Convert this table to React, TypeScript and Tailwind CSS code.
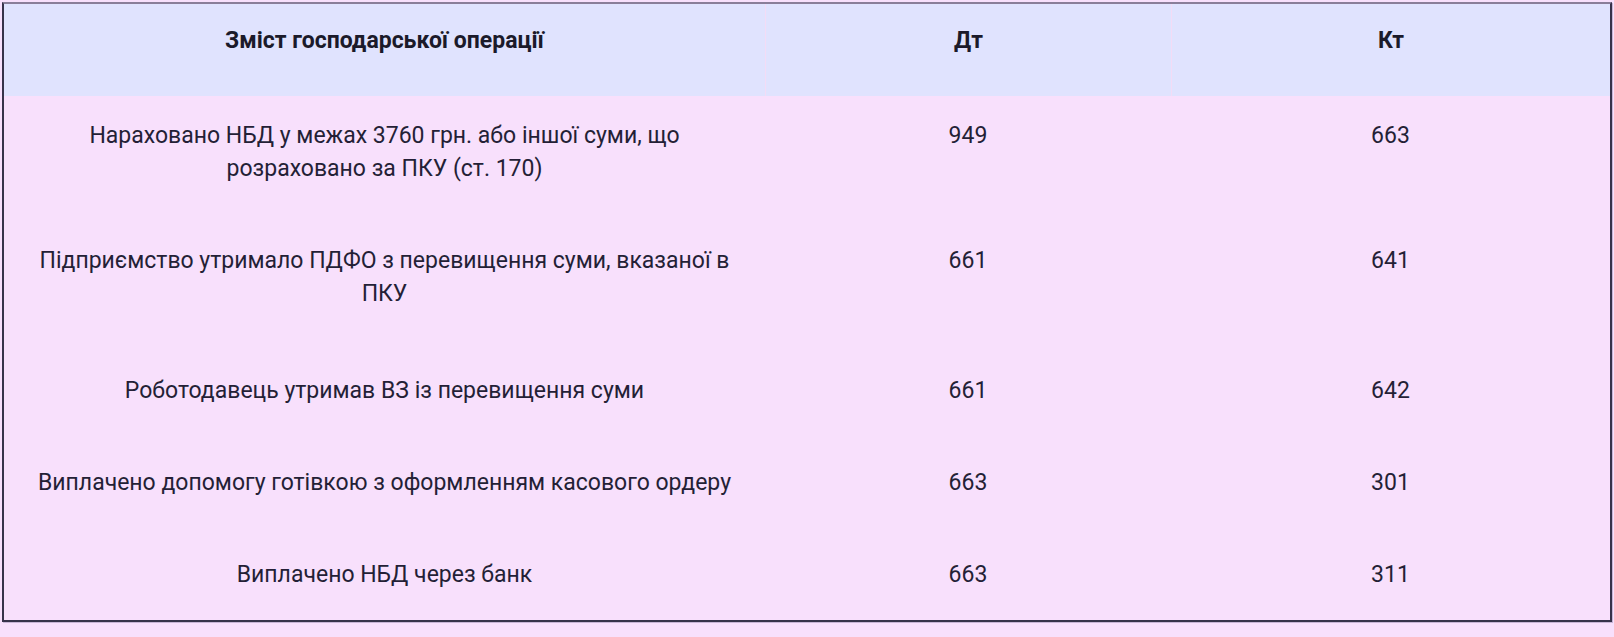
import React from 'react';

type Row = { lines: string[]; dt: string; kt: string; h: string; pt: string };

const rows: Row[] = [
  {
    lines: ['Нараховано НБД у межах 3760 грн. або іншої суми, що', 'розраховано за ПКУ (ст. 170)'],
    dt: '949',
    kt: '663',
    h: 'h-[126px]',
    pt: 'pt-[23px]',
  },
  {
    lines: ['Підприємство утримало ПДФО з перевищення суми, вказаної в', 'ПКУ'],
    dt: '661',
    kt: '641',
    h: 'h-[126px]',
    pt: 'pt-[22px]',
  },
  {
    lines: ['Роботодавець утримав ВЗ із перевищення суми'],
    dt: '661',
    kt: '642',
    h: 'h-[90px]',
    pt: 'pt-[26px]',
  },
  {
    lines: ['Виплачено допомогу готівкою з оформленням касового ордеру'],
    dt: '663',
    kt: '301',
    h: 'h-[91px]',
    pt: 'pt-[28px]',
  },
  {
    lines: ['Виплачено НБД через банк'],
    dt: '663',
    kt: '311',
    h: 'h-[91px]',
    pt: 'pt-[29px]',
  },
];

export default function App() {
  return (
    <div className="min-h-screen w-full bg-[#f8e0fc] pt-[2px] pl-[2px] font-['Roboto','Liberation_Sans',sans-serif]">
      <div className="w-[1610px] border-2 border-[#37324a] border-t-[#8a7e99] shadow-[1px_1px_0_#c8b5d6]">
        <div className="grid h-[92px] grid-cols-[761px_406px_439px] bg-[#e0e3fe] text-[23px] font-bold leading-[34px] text-[#1b1a2a]">
          <div className="pt-[20px] text-center">Зміст господарської операції</div>
          <div className="border-l border-[#f3dcf6] pt-[20px] text-center">Дт</div>
          <div className="border-l border-[#f3dcf6] pt-[20px] text-center">Кт</div>
        </div>
        {rows.map((r, i) => (
          <div
            key={i}
            className={`grid grid-cols-[761px_406px_439px] bg-[#f8e0fc] text-[23px] leading-[33px] text-[#241f36] ${r.h}`}
          >
            <div className={`px-[10px] text-center ${r.pt}`}>
              {r.lines.map((l, j) => (
                <div key={j}>{l}</div>
              ))}
            </div>
            <div className={`text-center ${r.pt}`}>{r.dt}</div>
            <div className={`text-center ${r.pt}`}>{r.kt}</div>
          </div>
        ))}
      </div>
    </div>
  );
}
